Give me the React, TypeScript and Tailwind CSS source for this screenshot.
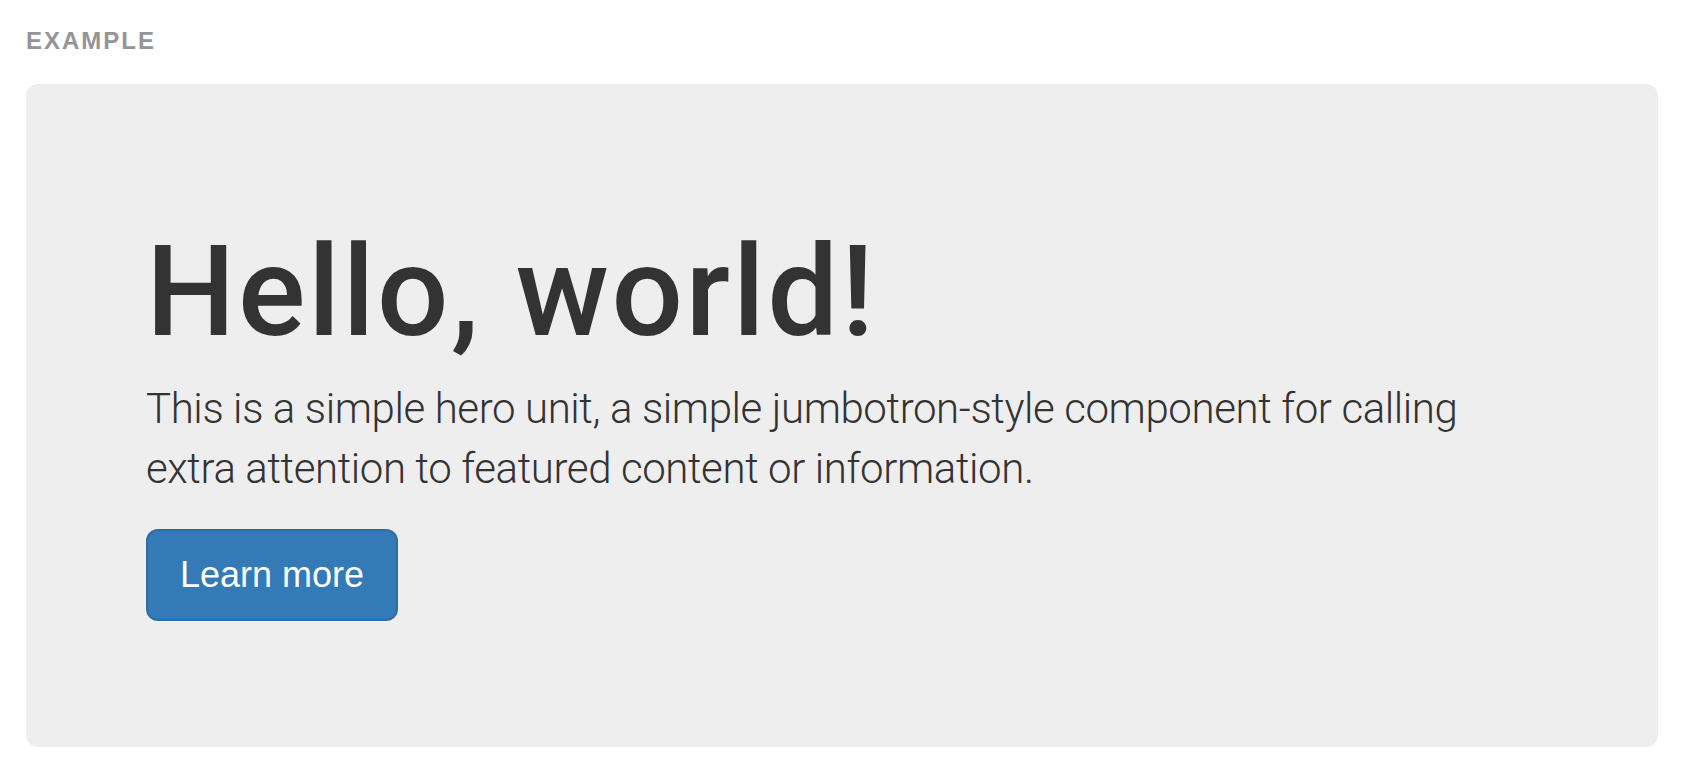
export default function App() {
  return (
    <div className="min-h-screen bg-white px-[26px] pt-[29px] font-['Liberation_Sans',Arial,sans-serif] text-[#333]">
      <div className="text-[24px] leading-[24px] font-bold uppercase tracking-[2px] text-[#959595]">
        Example
      </div>
      <div className="mt-[31px] rounded-[12px] bg-[#eeeeee] px-[120px] pt-[96px] pb-[96px]">
        <h1 className="mt-[43px] mb-[17px] font-['Roboto',Arial,sans-serif] text-[126px] leading-[1.1] font-medium tracking-[2.5px] text-[#333]">
          Hello, world!
        </h1>
        <p className="mb-[30px] font-['Roboto',Arial,sans-serif] text-[42px] leading-[60px] font-light tracking-[-0.4px] text-[#333]">
          This is a simple hero unit, a simple jumbotron-style component for calling extra attention to featured content or information.
        </p>
        <div className="mb-[30px]">
          <button className="h-[92px] rounded-[12px] border-2 border-[#2e6da4] bg-[#337ab7] px-[32px] text-[36px] leading-[48px] text-white">
            Learn more
          </button>
        </div>
      </div>
    </div>
  );
}
